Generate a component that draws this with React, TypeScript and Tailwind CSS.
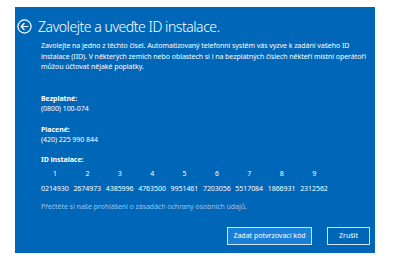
import React from 'react';

const ids = ['0214930', '2674973', '4385996', '4763500', '9951461', '7203056', '5517084', '1866931', '2312562'];

const App: React.FC = () => {
  return (
    <div className="w-[396px] h-[259px] bg-white pt-[7px] pl-[15px]" style={{ fontFamily: '"Noto Sans", "Open Sans", sans-serif' }}>
      <div className="w-[360px] h-[246px] bg-[#0067b8] text-white flex flex-col">
        <div className="flex items-center gap-[6px] pl-[2px] pt-[8px] h-[31px]">
          <svg width="15" height="15" viewBox="0 0 16 16" fill="none" stroke="white" strokeWidth="1.3">
            <circle cx="8" cy="8" r="7" />
            <path d="M4.5 8h7M7.5 4.8 4.5 8l3 3.2" strokeLinecap="round" strokeLinejoin="round" />
          </svg>
          <h1 className="text-[14px] font-light leading-none tracking-[-0.45px]">Zavolejte a uveďte ID instalace.</h1>
        </div>

        <div className="pl-[26px] pr-[8px] pt-[3px] text-[7px] leading-[10.5px] tracking-[-0.05px]">
          <p>
            Zavolejte na jedno z těchto čísel. Automatizovaný telefonní systém vás vyzve k zadání vašeho ID instalace (IID). V některých zemích nebo oblastech si i na bezplatných číslech někteří místní operátoři můžou účtovat nějaké poplatky.
          </p>

          <div className="mt-[21px]">
            <p className="font-bold">Bezplatné:</p>
            <p>(0800) 100-074</p>
          </div>

          <div className="mt-[10px]">
            <p className="font-bold">Placené:</p>
            <p>(420) 225 990 844</p>
          </div>

          <div className="mt-[9px]">
            <p className="font-bold">ID instalace:</p>
            <div className="grid grid-cols-[repeat(9,32.4px)] mt-[4px]">
              {ids.map((id, i) => (
                <div key={id} className="flex flex-col w-[28px]">
                  <span className="text-center">{i + 1}</span>
                  <span className="mt-[4px]">{id}</span>
                </div>
              ))}
            </div>
          </div>

          <p className="mt-[8px] text-[#9cc3e8]">Přečtěte si naše prohlášení o zásadách ochrany osobních údajů.</p>
        </div>

        <div className="mt-auto mb-[8px] flex justify-end gap-[15px] pr-[5px] text-[7px]">
          <button className="h-[18px] w-[85px] bg-[#1a7fd6] border border-[#cfe3f5] text-white">Zadat potvrzovací kód</button>
          <button className="h-[18px] w-[43px] border border-[#cfe3f5] text-white">Zrušit</button>
        </div>
      </div>
    </div>
  );
};

export default App;
